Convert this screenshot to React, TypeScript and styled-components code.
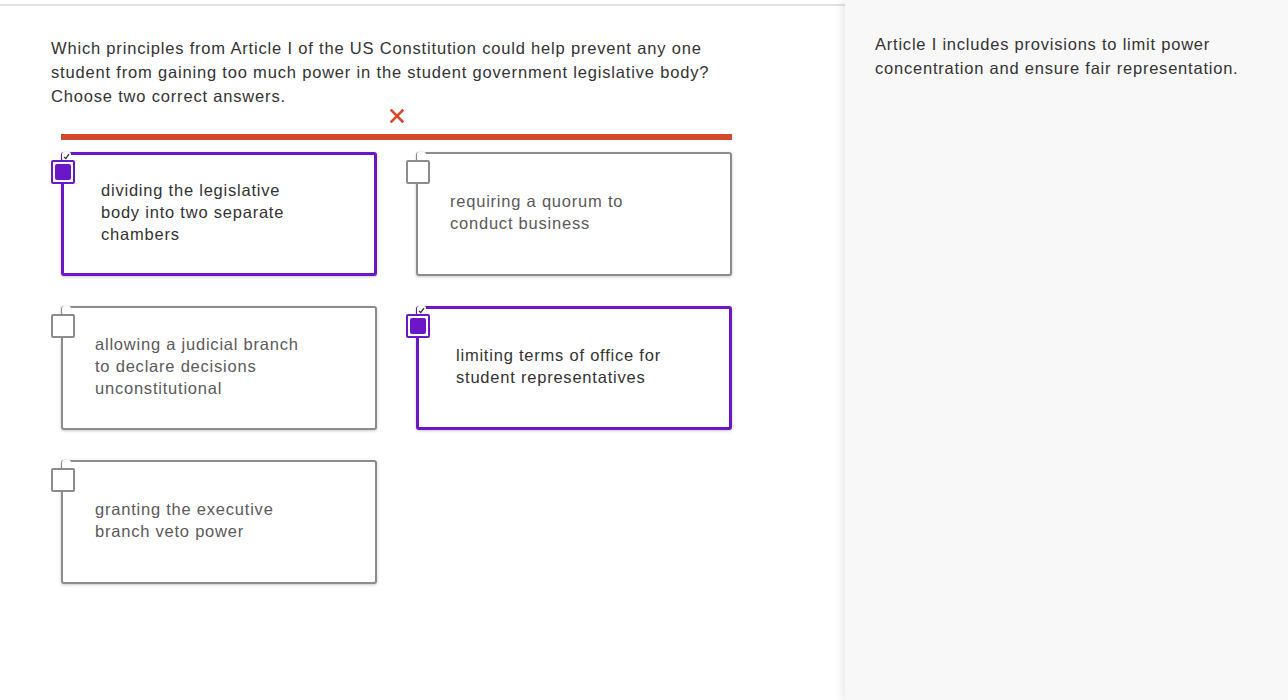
import React from "react";
import styled, { createGlobalStyle } from "styled-components";

const Global = createGlobalStyle`
  html, body { margin: 0; padding: 0; background: #fff; }
  body { font-family: "Liberation Sans", Arial, Helvetica, sans-serif; }
`;

const Page = styled.div`
  display: flex;
  width: 1288px;
  height: 700px;
  overflow: hidden;
`;

const Main = styled.div`
  width: 845px;
  flex: none;
  display: flex;
  flex-direction: column;
`;

const TopRule = styled.div`
  margin-top: 4px;
  height: 2px;
  background: #e2e2e2;
`;

const Content = styled.div`
  padding: 30px 0 0 51px;
  width: 690px;
`;

const Question = styled.p`
  margin: 0;
  font-size: 16.5px;
  letter-spacing: 0.82px;
  line-height: 24px;
  color: #333;
  width: 688px;
`;

const DropArea = styled.div`
  margin-left: 10px;
  width: 671px;
  display: flex;
  flex-direction: column;
  align-items: center;
`;

const Cross = styled.div`
  margin-top: 1px;
  height: 14px;
  display: flex;
  align-items: center;
`;

const Bar = styled.div`
  margin-top: 11px;
  width: 100%;
  height: 6px;
  background: #d24a2b;
`;

const Grid = styled.div`
  margin-top: 12px;
  width: 100%;
  display: grid;
  grid-template-columns: 316px 316px;
  column-gap: 39px;
  row-gap: 30px;
`;

const Card = styled.div<{ $on: boolean }>`
  position: relative;
  box-sizing: border-box;
  height: 124px;
  background: #fff;
  border: ${(p) => (p.$on ? "3px solid #6c17c7" : "2px solid #8c8c8c")};
  border-radius: 3px;
  box-shadow: 0 1px 3px rgba(0, 0, 0, 0.22);
  display: flex;
  align-items: center;
  padding: 0 0 4px ${(p) => (p.$on ? "37px" : "32px")};
`;

const Label = styled.div<{ $on: boolean }>`
  width: 216px;
  font-size: 16.5px;
  letter-spacing: 0.78px;
  line-height: 22px;
  color: ${(p) => (p.$on ? "#333" : "#5a5a5a")};
`;

const Native = styled.div<{ $on: boolean }>`
  position: absolute;
  left: ${(p) => (p.$on ? "-2px" : "-1px")};
  top: ${(p) => (p.$on ? "-3px" : "-2px")};
  width: 9px;
  height: 9px;
  background: #fff;
  border-radius: 2px;
  box-shadow: 0 0 1px rgba(0, 0, 0, 0.3);
  display: flex;
  align-items: center;
  justify-content: center;
`;

const Box = styled.div<{ $on: boolean }>`
  position: absolute;
  left: ${(p) => (p.$on ? "-13px" : "-12px")};
  top: ${(p) => (p.$on ? "5px" : "6px")};
  box-sizing: border-box;
  width: 24px;
  height: 24px;
  background: #fff;
  border: 2px solid ${(p) => (p.$on ? "#6c17c7" : "#8c8c8c")};
  border-radius: 2px;
  padding: 2px;
`;

const Fill = styled.div`
  width: 100%;
  height: 100%;
  background: #6c17c7;
  border-radius: 2px;
`;

const Side = styled.aside`
  flex: 1;
  background: #f8f8f8;
  box-shadow: -3px 0 8px rgba(0, 0, 0, 0.09);
  padding: 32px 30px 0 30px;
  position: relative;
`;

const Hint = styled.p`
  margin: 0;
  font-size: 16.5px;
  letter-spacing: 0.78px;
  line-height: 24px;
  color: #333;
`;

const options = [
  { text: "dividing the legislative body into two separate chambers", on: true },
  { text: "requiring a quorum to conduct business", on: false },
  { text: "allowing a judicial branch to declare decisions unconstitutional", on: false },
  { text: "limiting terms of office for student representatives", on: true },
  { text: "granting the executive branch veto power", on: false },
];

function Option({ text, on }: { text: string; on: boolean }) {
  return (
    <Card $on={on}>
      <Native $on={on}>
        {on && (
          <svg width="7" height="7" viewBox="0 0 7 7">
            <path d="M1 3.8 L2.8 5.6 L6 1.2" stroke="#222" strokeWidth="1.2" fill="none" />
          </svg>
        )}
      </Native>
      <Box $on={on}>{on && <Fill />}</Box>
      <Label $on={on}>{text}</Label>
    </Card>
  );
}

export default function App() {
  return (
    <>
      <Global />
      <Page>
        <Main>
          <TopRule />
          <Content>
            <Question>
              Which principles from Article I of the US Constitution could help prevent any one
              student from gaining too much power in the student government legislative body?
              Choose two correct answers.
            </Question>
            <DropArea>
              <Cross>
                <svg width="14" height="14" viewBox="0 0 14 14">
                  <path d="M1.5 1.5 L12.5 12.5 M12.5 1.5 L1.5 12.5" stroke="#d9482b" strokeWidth="2.6" strokeLinecap="square" />
                </svg>
              </Cross>
              <Bar />
              <Grid>
                {options.map((o) => (
                  <Option key={o.text} text={o.text} on={o.on} />
                ))}
              </Grid>
            </DropArea>
          </Content>
        </Main>
        <Side>
          <Hint>
            Article I includes provisions to limit power concentration and ensure fair representation.
          </Hint>
        </Side>
      </Page>
    </>
  );
}
